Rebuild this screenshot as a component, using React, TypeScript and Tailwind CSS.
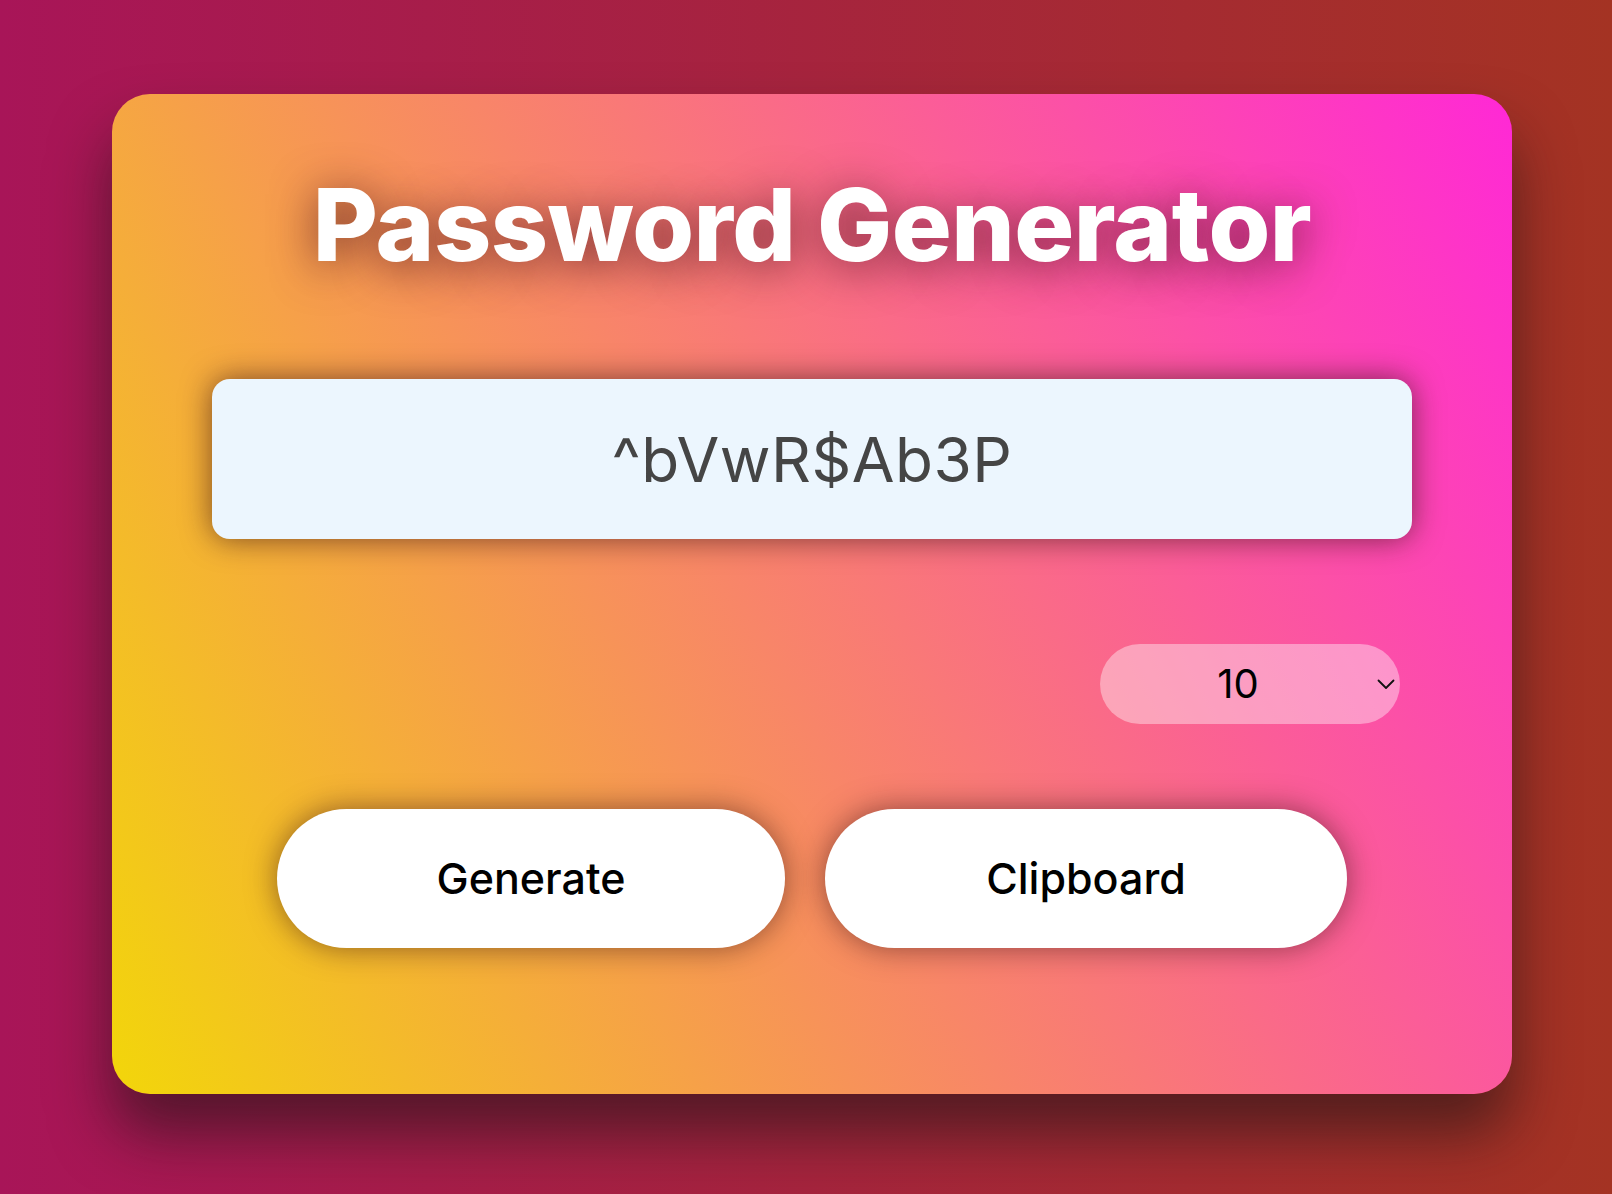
import { useState } from 'react';

const CHARS = 'ABCDEFGHIJKLMNOPQRSTUVWXYZabcdefghijklmnopqrstuvwxyz0123456789!@#$%^&*';

const makePassword = (len: number) => {
  let out = '';
  for (let i = 0; i < len; i++) out += CHARS[Math.floor(Math.random() * CHARS.length)];
  return out;
};

// --- Password Generator ---
export default function App() {
  const [length, setLength] = useState<number>(10);
  const [password, setPassword] = useState<string>('^bVwR$Ab3P');

  const copy = () => {
    navigator.clipboard?.writeText(password).catch(() => {});
  };

  return (
    <div className="min-h-screen w-full bg-[linear-gradient(to_right,#a81558,#a43323)] pl-[112px] pt-[94px] font-['Inter','Liberation_Sans',sans-serif]">
      <div className="w-[1400px] h-[1000px] rounded-[38px] bg-[linear-gradient(62deg,#f2d60a,#ff28d6)] shadow-[0_40px_60px_rgba(30,20,20,0.6)] flex flex-col items-center">
        <h1 className="mt-[61px] text-[100px] leading-[140px] font-extrabold tracking-[-0.5px] text-white [text-shadow:0_6px_45px_rgba(80,20,30,0.8)]">
          Password Generator
        </h1>

        <div className="mt-[84px] w-[1200px] h-[160px] rounded-[18px] bg-[#ecf6fe] shadow-[0_0_30px_rgba(60,20,20,0.65)] flex items-center justify-center">
          <span className="text-[62px] text-[#454545] tracking-[0.5px]">{password}</span>
        </div>

        <div className="mt-[105px] w-[1200px] flex justify-end pr-[12px]">
          <div className="relative w-[300px] h-[80px] rounded-full bg-white/40">
            <select
              value={length}
              onChange={e => setLength(Number(e.target.value))}
              className="w-full h-full appearance-none bg-transparent rounded-full text-center text-[40px] text-black outline-none pr-[24px]"
            >
              {[6, 8, 10, 12, 14, 16, 20].map(n => (
                <option key={n} value={n}>{n}</option>
              ))}
            </select>
            <svg className="absolute right-[5px] top-[35px] pointer-events-none" width="18" height="11" viewBox="0 0 18 11" fill="none">
              <polyline points="1.5,1.5 9,9 16.5,1.5" stroke="#111" strokeWidth="1.8" strokeLinecap="round" strokeLinejoin="round" />
            </svg>
          </div>
        </div>

        <div className="mt-[85px] flex gap-[40px]">
          <button
            onClick={() => setPassword(makePassword(length))}
            className="w-[508px] h-[139px] rounded-full bg-white text-[43px] font-medium text-black shadow-[0_0_30px_rgba(60,20,20,0.55)]"
          >
            Generate
          </button>
          <button
            onClick={copy}
            className="w-[522px] h-[139px] rounded-full bg-white text-[43px] font-medium text-black shadow-[0_0_30px_rgba(60,20,20,0.55)]"
          >
            Clipboard
          </button>
        </div>
      </div>
    </div>
  );
}
